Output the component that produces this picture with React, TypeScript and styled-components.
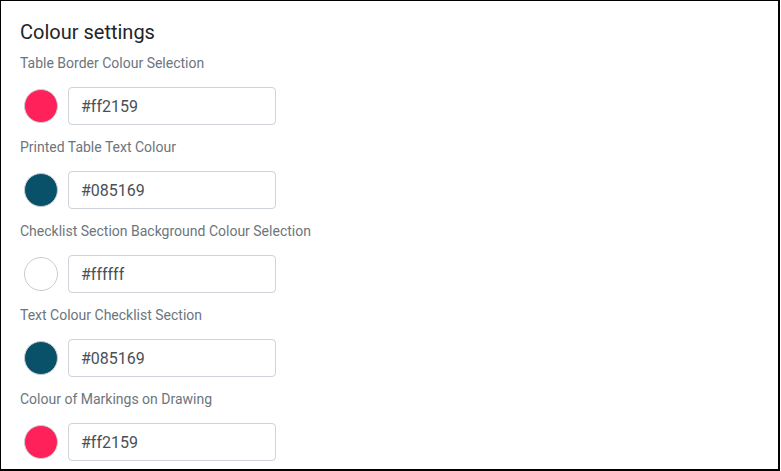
import React from "react";
import styled, { createGlobalStyle } from "styled-components";

const Global = createGlobalStyle`
  html, body { margin: 0; padding: 0; background: #fff; }
  body { font-family: Roboto, "Noto Sans", Arial, sans-serif; }
  * { box-sizing: border-box; }
`;

const Frame = styled.div`
  width: 780px;
  height: 471px;
  border-style: solid;
  border-color: #000;
  border-width: 1px 2px 2px 1px;
  background: #fff;
  overflow: hidden;
  padding: 19px 19px;
`;

const Title = styled.h2`
  margin: 0 0 9px 0;
  font-size: 20px;
  line-height: 24px;
  font-weight: 400;
  color: #212529;
`;

const Section = styled.div`
  display: flex;
  flex-direction: column;
  margin-bottom: 12px;
`;

const Label = styled.div`
  font-size: 14px;
  line-height: 20px;
  color: #6c757d;
  margin-bottom: 14px;
`;

const Row = styled.div`
  display: flex;
  align-items: center;
  gap: 10px;
`;

const Swatch = styled.div<{ $color: string }>`
  width: 34px;
  height: 34px;
  margin-left: 4px;
  border-radius: 50%;
  background: ${(p) => p.$color};
  border: 1px solid #c8ccd2;
`;

const HexInput = styled.input`
  width: 208px;
  height: 38px;
  border: 1px solid #ced4da;
  border-radius: 4px;
  padding: 0 12px;
  font-family: Roboto, "Noto Sans", Arial, sans-serif;
  font-size: 16px;
  color: #495057;
  background: #fff;
  outline: none;
`;

const items = [
  { label: "Table Border Colour Selection", color: "#ff2159" },
  { label: "Printed Table Text Colour", color: "#085169" },
  { label: "Checklist Section Background Colour Selection", color: "#ffffff" },
  { label: "Text Colour Checklist Section", color: "#085169" },
  { label: "Colour of Markings on Drawing", color: "#ff2159" },
];

export default function App() {
  return (
    <>
      <Global />
      <Frame>
        <Title>Colour settings</Title>
        {items.map((it, i) => (
          <Section key={i}>
            <Label>{it.label}</Label>
            <Row>
              <Swatch $color={it.color} />
              <HexInput defaultValue={it.color} readOnly />
            </Row>
          </Section>
        ))}
      </Frame>
    </>
  );
}
